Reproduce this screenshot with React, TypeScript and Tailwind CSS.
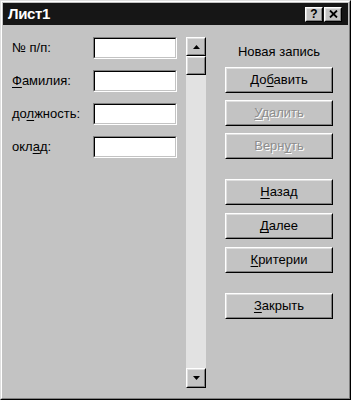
import React from "react"

const font = { fontFamily: '"Liberation Sans", Arial, sans-serif' }

// raised win95 bevel
const Raised = ({ className = "", children }: { className?: string; children?: React.ReactNode }) => (
  <div className={`border border-t-white border-l-white border-r-black border-b-black ${className}`}>
    <div className="w-full h-full border border-t-[#dfdfdf] border-l-[#dfdfdf] border-r-[#808080] border-b-[#808080] bg-[#c3c3c3] flex items-center justify-center">
      {children}
    </div>
  </div>
)

const Field = ({ label }: { label: React.ReactNode }) => (
  <div className="flex items-center h-[22px]">
    <div className="w-[81px] text-[13px] text-black">{label}</div>
    <div className="w-[84px] h-[22px] border border-t-[#808080] border-l-[#808080] border-r-white border-b-white">
      <div className="w-full h-full border border-t-black border-l-black border-r-[#c3c3c3] border-b-[#c3c3c3] bg-white" />
    </div>
  </div>
)

const Btn = ({ children, disabled = false }: { children: React.ReactNode; disabled?: boolean }) => (
  <Raised className="w-[108px] h-[26px]">
    <span
      className={`text-[13px] ${disabled ? "text-[#8e8e8e] [text-shadow:1px_1px_0_#fff]" : "text-black"}`}
    >
      {children}
    </span>
  </Raised>
)

const U = ({ children }: { children: React.ReactNode }) => <span className="underline underline-offset-2">{children}</span>

export default function App() {
  return (
    <div style={font} className="w-[351px] h-[400px] bg-[#c3c3c3] border border-t-[#dfdfdf] border-l-[#dfdfdf] border-r-black border-b-black">
      <div className="w-full h-full border border-t-white border-l-white border-r-[#808080] border-b-[#808080] p-px flex flex-col">
        {/* title bar */}
        <div className="h-[22px] bg-[#161616] flex items-center pl-[5px] pr-[6px]">
          <span className="text-white font-bold text-[15px] tracking-tight">Лист1</span>
          <div className="ml-auto flex gap-[1px]">
            <Raised className="w-[18px] h-[15px]">
              <span className="text-[12px] font-bold leading-none text-black">?</span>
            </Raised>
            <Raised className="w-[18px] h-[15px]">
              <svg width="9" height="8" viewBox="0 0 9 8">
                <path d="M1 0.5 L8 7.5 M8 0.5 L1 7.5" stroke="#000" strokeWidth="1.8" />
              </svg>
            </Raised>
          </div>
        </div>

        {/* body */}
        <div className="flex pt-[12px] pl-[9px]">
          <div className="flex flex-col gap-[11px] w-[165px]">
            <Field label="№ п/п:" />
            <Field label={<><U>Ф</U>амилия:</>} />
            <Field label={<>до<U>л</U>жность:</>} />
            <Field label={<>окл<U>а</U>д:</>} />
          </div>

          {/* scrollbar */}
          <div className="ml-[9px] w-[20px] h-[351px] flex flex-col bg-[#e2e2e2]">
            <Raised className="w-[20px] h-[19px]">
              <svg width="7" height="4" viewBox="0 0 7 4"><path d="M3.5 0 L7 4 L0 4 Z" fill="#000" /></svg>
            </Raised>
            <Raised className="w-[20px] h-[19px]" />
            <div className="flex-1" />
            <Raised className="w-[20px] h-[20px]">
              <svg width="7" height="4" viewBox="0 0 7 4"><path d="M0 0 L7 0 L3.5 4 Z" fill="#000" /></svg>
            </Raised>
          </div>

          {/* buttons */}
          <div className="ml-[19px] flex flex-col w-[108px]">
            <div className="h-[30px] flex items-center justify-center text-[13px] text-black">Новая запись</div>
            <div className="flex flex-col gap-[7px]">
              <Btn>До<U>б</U>авить</Btn>
              <Btn disabled><U>У</U>далить</Btn>
              <Btn disabled>Верн<U>у</U>ть</Btn>
            </div>
            <div className="flex flex-col gap-[8px] mt-[20px]">
              <Btn><U>Н</U>азад</Btn>
              <Btn><U>Д</U>алее</Btn>
              <Btn><U>К</U>ритерии</Btn>
            </div>
            <div className="mt-[20px]">
              <Btn><U>З</U>акрыть</Btn>
            </div>
          </div>
        </div>
      </div>
    </div>
  )
}
